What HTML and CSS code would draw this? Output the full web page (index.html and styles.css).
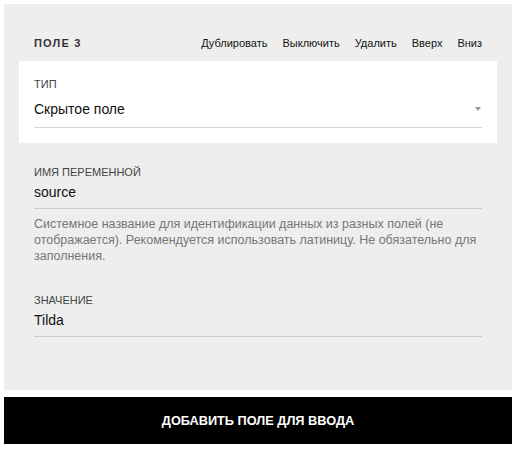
FILE: index.html
```html
<!DOCTYPE html>
<html lang="ru">
<head>
    <meta charset="UTF-8">
    <meta name="viewport" content="width=device-width, initial-scale=1.0">
    <title>Поле 3</title>
    <link rel="stylesheet" href="styles.css">
</head>
<body>
<div class="panel">
    <div class="panel-head">
        <span class="panel-title">Поле 3</span>
        <div class="actions">
            <a href="#">Дублировать</a>
            <a href="#">Выключить</a>
            <a href="#">Удалить</a>
            <a href="#">Вверх</a>
            <a href="#">Вниз</a>
        </div>
    </div>

    <div class="field field-type">
        <div class="field-label">Тип</div>
        <div class="select">
            <span>Скрытое поле</span>
            <span class="arrow"></span>
        </div>
    </div>

    <div class="field field-var">
        <div class="field-label">Имя переменной</div>
        <div class="input">source</div>
        <div class="hint">Системное название для идентификации данных из разных полей (не отображается). Рекомендуется использовать латиницу. Не обязательно для заполнения.</div>
    </div>

    <div class="field field-value">
        <div class="field-label">Значение</div>
        <div class="input">Tilda</div>
    </div>
</div>
<button class="add-btn" type="button">Добавить поле для ввода</button>
</body>
</html>
```

FILE: styles.css
```css
body {
    margin: 0;
    padding: 4px 9px 0 4px;
    font-family: "Liberation Sans", Arial, sans-serif;
    color: #111;
    background-color: #ffffff;
}

.panel {
    background-color: #eeeeee;
    padding: 29px 15px 53px;
}

.panel-head {
    display: flex;
    justify-content: space-between;
    align-items: center;
    height: 20px;
    padding: 0 15px;
    margin-bottom: 8px;
}

.panel-title {
    font-size: 11px;
    font-weight: bold;
    letter-spacing: 1.2px;
    text-transform: uppercase;
    color: #333;
}

.actions {
    display: flex;
    gap: 15px;
}

.actions a {
    font-size: 11px;
    color: #111;
    text-decoration: none;
}

.field {
    padding: 0 15px;
}

.field-label {
    font-size: 11px;
    line-height: 14px;
    text-transform: uppercase;
    color: #444;
}

.field-type {
    background-color: #ffffff;
    padding-top: 16px;
    padding-bottom: 15px;
}

.select {
    display: flex;
    justify-content: space-between;
    align-items: center;
    font-size: 14px;
    line-height: 20px;
    padding: 8px 0 8px;
    border-bottom: 1px solid #d4d4d4;
}

.arrow {
    width: 0;
    height: 0;
    margin-right: 1px;
    border-left: 3px solid transparent;
    border-right: 3px solid transparent;
    border-top: 4px solid #999;
}

.input {
    font-size: 14px;
    line-height: 20px;
    padding: 3px 0 6px;
    border-bottom: 1px solid #cccccc;
}

.field-var {
    margin-top: 22px;
}

.hint {
    margin-top: 7px;
    font-size: 12.5px;
    line-height: 16px;
    color: #777;
}

.field-value {
    margin-top: 29px;
}

.add-btn {
    display: block;
    width: 100%;
    height: 47px;
    margin-top: 7px;
    border: none;
    background-color: #000;
    color: #fff;
    font-family: "Liberation Sans", Arial, sans-serif;
    font-size: 12.75px;
    font-weight: bold;
    text-transform: uppercase;
    cursor: pointer;
}
```
